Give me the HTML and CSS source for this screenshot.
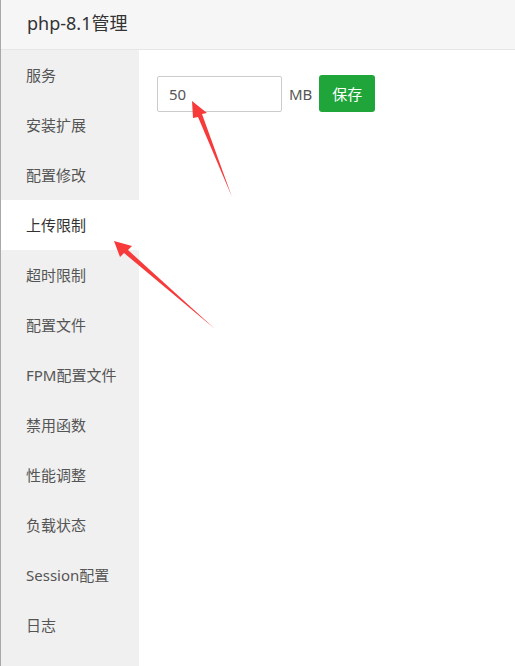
FILE: index.html
```html
<!DOCTYPE html>
<html lang="zh">
<head>
<meta charset="utf-8">
<title>php-8.1管理</title>
<link rel="stylesheet" href="styles.css">
</head>
<body>
<div class="panel">
  <header class="head">php-8.1管理</header>
  <div class="body">
    <nav class="side">
      <div class="item">服务</div>
      <div class="item">安装扩展</div>
      <div class="item">配置修改</div>
      <div class="item active">上传限制</div>
      <div class="item">超时限制</div>
      <div class="item">配置文件</div>
      <div class="item">FPM配置文件</div>
      <div class="item">禁用函数</div>
      <div class="item">性能调整</div>
      <div class="item">负载状态</div>
      <div class="item">Session配置</div>
      <div class="item">日志</div>
    </nav>
    <main class="main">
      <div class="row">
        <input class="field" type="text" value="50">
        <span class="unit">MB</span>
        <button class="btn">保存</button>
      </div>
    </main>
  </div>
  <svg class="arrows" width="515" height="666" viewBox="0 0 515 666">
    <polygon points="192,101 207,113 202,114 232,197 198,117 193,118"/>
    <polygon points="114,241 132,246 128,250 215,329 124,253 120,257"/>
  </svg>
</div>
</body>
</html>
```
FILE: styles.css
```css
html, body {
  margin: 0;
  padding: 0;
  background: #fff;
}
body {
  font-family: "Noto Sans", "Noto Sans CJK SC", sans-serif;
  color: #333;
}
.panel {
  position: relative;
  width: 514px;
  height: 666px;
  border-left: 1px solid #a8a8a8;
  overflow: hidden;
}
.head {
  height: 49px;
  background: #f6f6f6;
  border-bottom: 1px solid #e6e6e6;
  padding-left: 26px;
  font-size: 18px;
  line-height: 47px;
  color: #333;
}
.body {
  display: flex;
  height: 616px;
}
.side {
  width: 138px;
  background: #f0f0f0;
  flex: none;
}
.item {
  height: 50px;
  line-height: 50px;
  padding-left: 25px;
  font-size: 15px;
  color: #555;
}
.item.active {
  background: #fff;
  color: #333;
}
.main {
  flex: 1;
  padding: 25px 18px;
}
.row {
  display: flex;
  align-items: center;
  gap: 7px;
}
.field {
  box-sizing: border-box;
  width: 125px;
  height: 36px;
  border: 1px solid #ccc;
  border-radius: 2px;
  padding: 0 11px;
  font-family: "Noto Sans", "Noto Sans CJK SC", sans-serif;
  font-size: 15px;
  color: #555;
  outline: none;
}
.unit {
  font-size: 15px;
  color: #555;
}
.btn {
  box-sizing: border-box;
  height: 37px;
  padding: 0 13px;
  border: none;
  border-radius: 3px;
  background: #20a53a;
  color: #fff;
  font-family: "Noto Sans CJK SC", sans-serif;
  font-size: 15px;
}
.arrows {
  position: absolute;
  left: -1px;
  top: 0;
  pointer-events: none;
}
.arrows polygon {
  fill: #f73b3b;
}
```
